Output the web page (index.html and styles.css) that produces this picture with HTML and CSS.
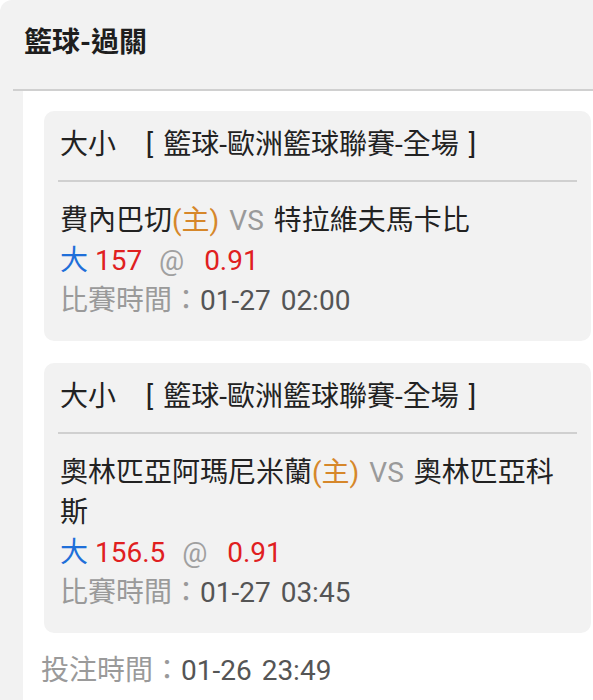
FILE: index.html
```html
<!DOCTYPE html>
<html>
<head>
  <meta charset="utf-8">
  <title>籃球-過關</title>
  <link rel="stylesheet" href="styles.css">
</head>
<body>
  <div class="panel">
    <div class="panelHead">籃球-過關</div>
    <div class="panelBody">
      <div class="betCard">
        <div class="betTitle">大小&nbsp;&nbsp;&nbsp;[ 籃球-歐洲籃球聯賽-全場 ]</div>
        <div class="betInfo">
          <div class="teams">費內巴切<span class="home">(主)</span> <span class="vs">VS</span> 特拉維夫馬卡比</div>
          <div class="odds"><span class="pick">大</span> <span class="red">157</span>&nbsp; <span class="at">@</span>&nbsp; <span class="red">0.91</span></div>
          <div class="time"><span class="label">比賽時間：</span>01-27 02:00</div>
        </div>
      </div>

      <div class="betCard">
        <div class="betTitle">大小&nbsp;&nbsp;&nbsp;[ 籃球-歐洲籃球聯賽-全場 ]</div>
        <div class="betInfo">
          <div class="teams">奧林匹亞阿瑪尼米蘭<span class="home">(主)</span> <span class="vs">VS</span> 奧林匹亞科斯</div>
          <div class="odds"><span class="pick">大</span> <span class="red">156.5</span>&nbsp; <span class="at">@</span>&nbsp; <span class="red">0.91</span></div>
          <div class="time"><span class="label">比賽時間：</span>01-27 03:45</div>
        </div>
      </div>

      <div class="betTime"><span class="label">投注時間：</span>01-26 23:49</div>
    </div>
  </div>
</body>
</html>
```

FILE: styles.css
```css
body {
  margin: 0;
  font-family: Roboto, "Noto Sans CJK TC", sans-serif;
  font-size: 28px;
  line-height: 40px;
  word-spacing: 3px;
  color: #222;
  background: #fff;
}
.panel {
  background: #f2f2f2;
  border-top-left-radius: 12px;
  min-height: 700px;
}
.panelHead {
  margin-left: 13px;
  padding: 23px 11px 26px;
  font-weight: bold;
  color: #1e1e1e;
  border-bottom: 2px solid #d0d0d0;
}
.panelBody {
  margin-left: 23px;
  background: #fff;
  padding: 20px 2px 10px 21px;
  min-height: 600px;
}
.betCard {
  background: #f2f2f2;
  border-radius: 10px;
  padding: 14px 14px 20px 16px;
  margin-bottom: 22px;
}
.betTitle {
  padding-bottom: 15px;
  border-bottom: 2px solid #d0d0d0;
  margin-left: -2px;
  padding-left: 2px;
}
.betInfo {
  padding-top: 19px;
}
.home { color: #d6872a; }
.vs { color: #9a9a9a; }
.pick { color: #1f6fd9; }
.red { color: #e0201f; }
.odds { word-spacing: 0; }
.at {
  color: #a0a0a0;
  margin: 0 6px 0 3px;
}
.time, .betTime { color: #555; }
.label { color: #9a9a9a; }
.betTime {
  margin-top: -4px;
  margin-left: -3px;
}
```
